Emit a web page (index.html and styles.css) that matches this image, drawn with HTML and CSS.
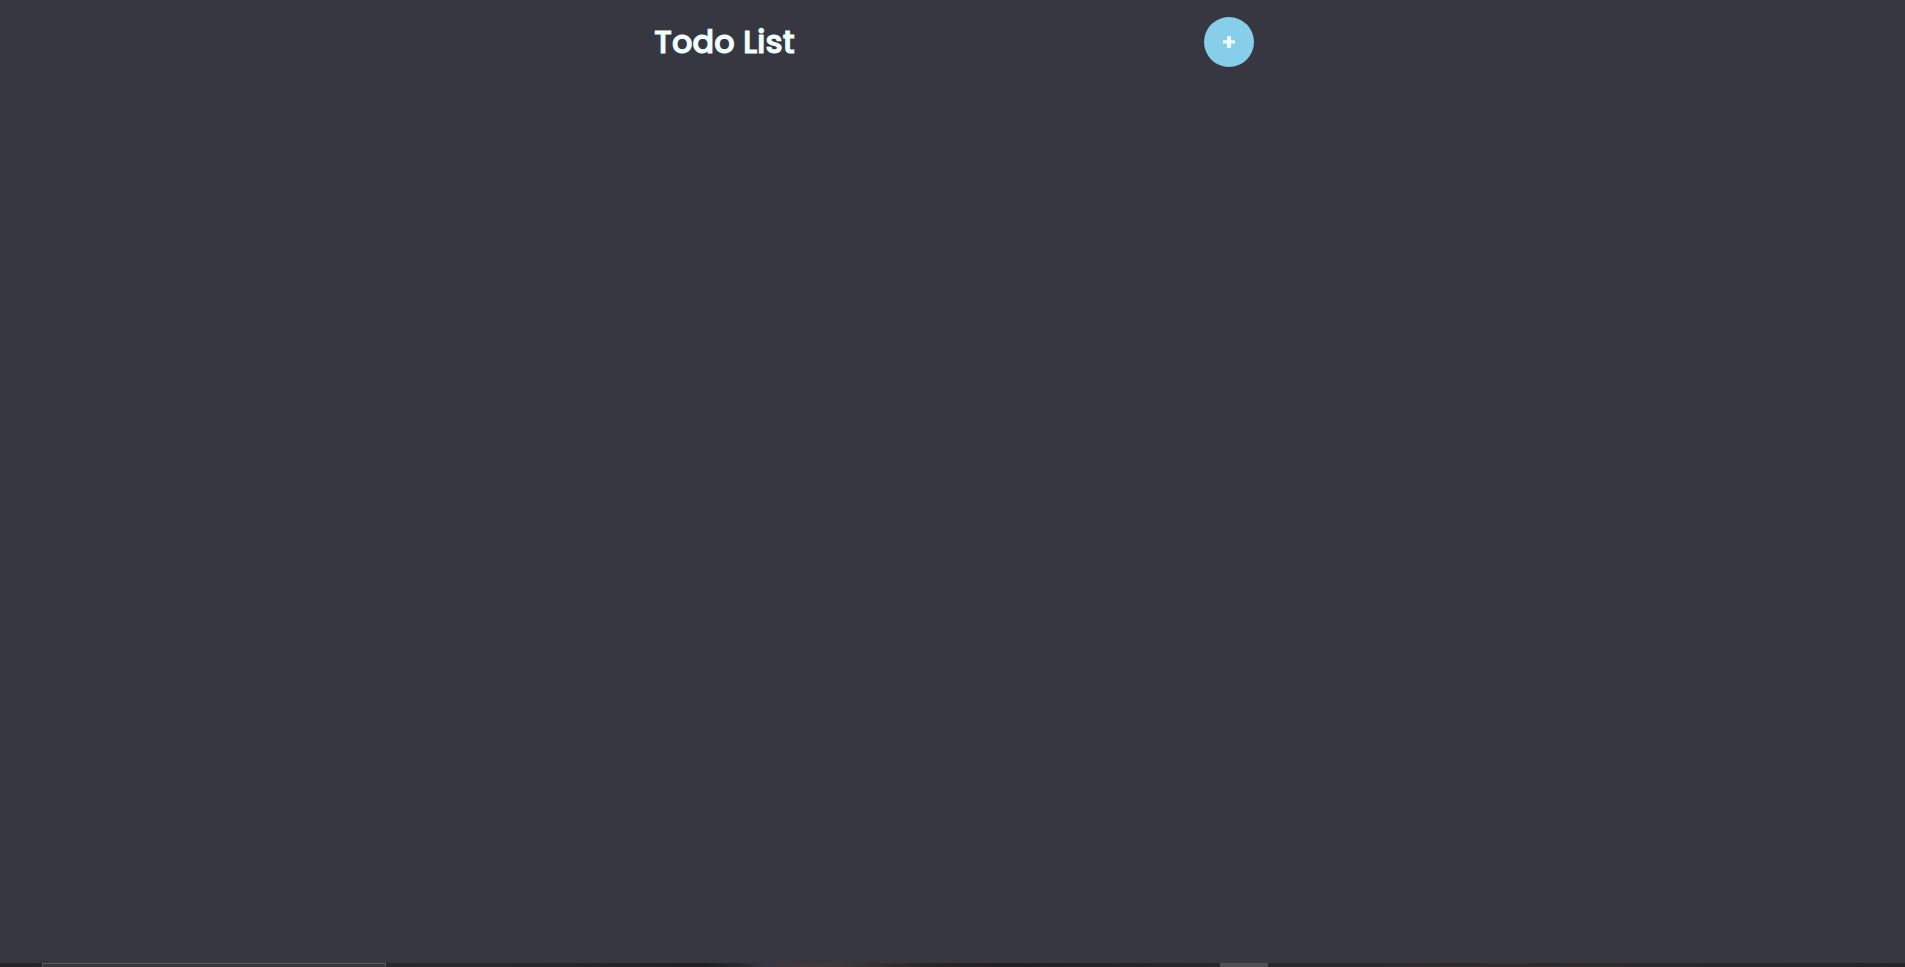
FILE: index.html
```html
<!DOCTYPE html>
<html lang="en">
<head>
<meta charset="utf-8">
<title>Todo List</title>
<link rel="stylesheet" href="styles.css">
</head>
<body>
<main class="page">
  <header class="header">
    <h1 class="title">Todo List</h1>
    <button class="add" type="button" aria-label="Add todo">
      <svg class="plus" viewBox="0 0 12 12" aria-hidden="true"><path d="M4 .3h4v3.9h4v3.2H8V12H4V7.400H0V4.200h4z"/></svg>
    </button>
  </header>
</main>
<footer class="taskbar">
  <div class="search"></div>
  <div class="active"></div>
</footer>
</body>
</html>
```
FILE: styles.css
```css
* {
  box-sizing: border-box;
}

body {
  margin: 0;
  min-height: 100vh;
  display: flex;
  flex-direction: column;
  background: #373741;
  color: azure;
  font-family: Poppins, Inter, sans-serif;
}

.page {
  flex: 1;
}

.header {
  display: flex;
  align-items: center;
  justify-content: space-between;
  max-width: 603px;
  margin: 0 auto;
  padding: 17px 0;
}

.title {
  margin: 0;
  padding-left: 3px;
  font-size: 32px;
  font-weight: 500;
  line-height: 48px;
  -webkit-text-stroke: 1px currentColor;
}

.add {
  display: grid;
  place-items: center;
  width: 50px;
  height: 50px;
  padding: 0;
  border: 0;
  border-radius: 50%;
  background: skyblue;
  color: azure;
  cursor: pointer;
}

.plus {
  width: 12px;
  height: 12px;
  fill: currentColor;
}

.taskbar {
  display: flex;
  height: 4px;
  padding-left: 42px;
  background: linear-gradient(90deg, #252525 0, #292929 26%, #202021 37%, #292a2b 39%, #373741 40%, #443639 42%, #403739 44%, #323230 46%, #2a2424 49%, #202021 53%, #292929 65%, #2a2a2a 73%, #322b29 79%, #292929 87%, #252525 100%);
}

.search {
  width: 344px;
  border: 1px solid #5a5a5a;
  border-bottom: 0;
  background: #373737;
}

.active {
  width: 48px;
  margin-left: 834px;
  background: #525050;
}
```
